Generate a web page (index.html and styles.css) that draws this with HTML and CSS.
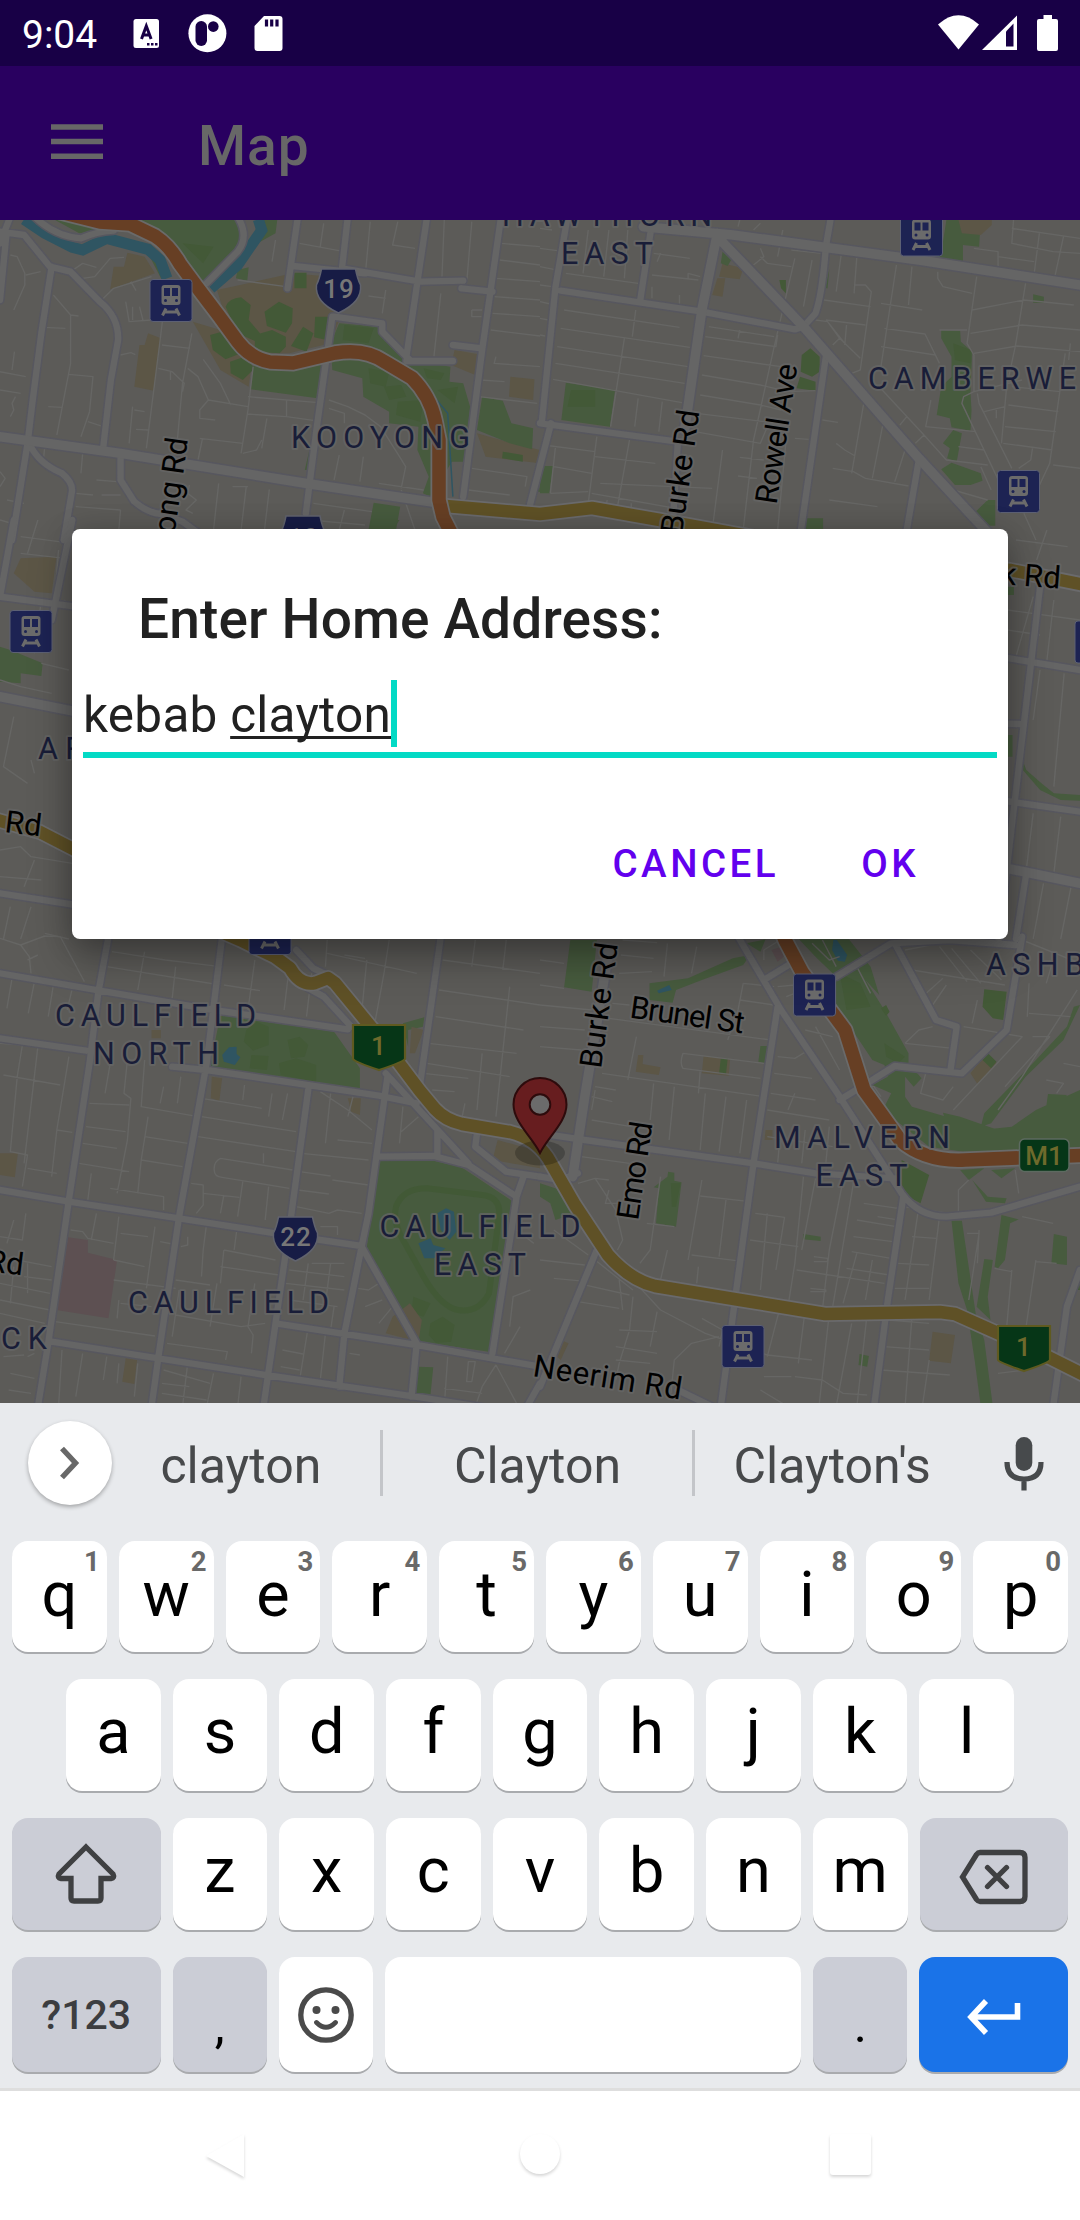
FILE: index.html
```html
<!DOCTYPE html>
<html lang="en">
<head>
<meta charset="utf-8">
<title>Map</title>
<link rel="stylesheet" href="styles.css">
</head>
<body>
<div class="screen">
  <header class="status">
    <span class="time">9:04</span>
    <svg class="status-left" width="160" height="66" viewBox="130 0 160 66">
      <rect x="133.500" y="19" width="25.500" height="29" rx="2.500" fill="#fff"/>
      <path d="M141.500 39l4.800-13 4.800 13M143 35h6.500" fill="none" stroke="#180046" stroke-width="3"/>
      <path d="M147 44.200h2.500M151 44.200h2.500M155 44.200h2.500" stroke="#180046" stroke-width="2.500"/>
      <circle cx="207.400" cy="33.300" r="19" fill="#fff"/>
      <rect x="195.500" y="21" width="11.500" height="25" rx="5.700" fill="#180046"/>
      <circle cx="213.300" cy="26.600" r="5.300" fill="#180046"/>
      <path d="M264 16h15.500q3 0 3 3v29q0 3-3 3h-22q-3 0-3-3V26z" fill="#fff"/>
      <path d="M266.500 19.500v7M271.700 19.500v7M277 19.500v7" stroke="#180046" stroke-width="3.200"/>
    </svg>
    <svg class="status-right" width="130" height="66" viewBox="935 0 130 66">
      <path d="M938 24.500Q958.500 6 979 24.500L958.500 49.500z" fill="#fff"/>
      <path d="M982 50L1017 15.500V50z" fill="#fff"/>
      <path d="M1006 46.500V31.500l7.500-8v23z" fill="#180046"/>
      <path d="M1043.500 15h8.500v4h4q2 0 2 2v28q0 2-2 2h-17q-2 0-2-2V21q0-2 2-2h4.500z" fill="#fff"/>
    </svg>
  </header>
  <div class="appbar">
    <svg class="menu" width="52" height="36" viewBox="0 0 52 36"><path d="M0 3h52M0 17.500h52M0 32.300h52" stroke="#676767" stroke-width="5.600"/></svg>
    <h1 class="title">Map</h1>
  </div>

  <main class="stage">
    <svg class="map" width="1080" height="1183" viewBox="0 220 1080 1183">
      <defs>
        <g id="station">
          <rect x="-21" y="-21" width="42" height="42" rx="3" fill="#1d2353" stroke="#5c6074" stroke-width="1"/>
          <rect x="-9.500" y="-15.500" width="19" height="20" rx="3" fill="#6b6b6b"/>
          <path d="M-7-12.500h6v8h-6zM1-12.500h6v8H1z" fill="#1d2353"/>
          <circle cx="-5.500" cy="0" r="1.500" fill="#1d2353"/><circle cx="5.500" cy="0" r="1.500" fill="#1d2353"/>
          <path d="M-5 8L-8.500 15M5 8l3.500 7M-7 11.500H7" stroke="#6b6b6b" stroke-width="3" fill="none"/>
        </g>
        <path id="shield" d="M-17 0H17Q19 10 22 16Q24 33 0 44Q-24 33-22 16Q-19 10-17 0Z" fill="#171c45" stroke="#61636d" stroke-width="1.500"/>
        <path id="alt" d="M-26 1H26V35Q24 38 0 46Q-24 38-26 35Z" fill="#063617" stroke="#5f5a20" stroke-width="2.200"/>

        <g id="mainA">
          <path d="M30 20L0 100M0 65L70 75L145 170L205 185L290 275Q345 320 343 390L322 510L300 710M150 170L120 370L95 570L80 700L35 990M18 80L0 270M85 700Q110 760 180 790Q215 820 208 850L185 990M350 745V810L390 875Q430 910 470 912L530 935L590 980M865 20L835 235M1010 20L993 175L1220 215L1345 212M850 168L1060 190M1240 20L1180 440M1180 453H1315M1455 20L1400 420L1345 860M1340 235L1430 245M1315 405L1400 415M970 320L1110 340V365L1190 450M965 320L920 650L888 910M1600 640L1535 900"/>
          <path d="M100 20Q160 80 235 85Q280 65 330 62M690 20Q725 80 690 125L600 220"/>
        </g>
        <g id="bigA"><path d="M-30 676L0 680L350 730L900 822L1280 880"/></g>
        <g id="mainB">
          <path d="M80 20L45 230L5 640M0 640L400 695M322 60L292 265M60 242L470 305L740 358L765 350M845 20L830 110Q820 250 800 310L765 350M830 440L755 980M1100 750L1065 960M400 700L385 950"/>
        </g>
        <g id="bigB"><path d="M300 50L560 75L1100 150L1600 230M515 70L470 300L420 660M510 75L765 350L1100 745L1320 990"/></g>
        <g id="mainM">
          <path d="M20 0L0 230M105 0L75 300M0 230L110 260M0 1120L110 1155M1510 200L1470 900L1450 1257M1450 410L1568 450M1450 840L1568 875M1490 1060L1475 1257M1450 610L1480 612"/>
        </g>
        <g id="bigM"><path d="M0 530L110 575M1450 1040L1568 1090"/></g>
        <g id="mainC">
          <path d="M315 20L285 190L260 400L200 810L140 1240L110 1430M0 130L290 182L620 240L1010 298M645 20L600 400L520 860L460 1280L440 1430M0 325L250 362M500 410L600 420L1100 497L1210 520M895 480L845 860L800 1180L765 1430M0 780L200 815L520 865L800 910L1050 948M1280 20L1220 460M1125 440L1070 850L1050 950L1000 1210L985 1370M1095 680L1260 678L1360 705L1500 800L1520 740M1050 950L1210 1240L1195 1400M800 1180L1210 1245L1568 1310M150 1235L460 1285L770 1335L1240 1405L1568 1460M1120 430L1200 520L1280 610L1360 700M1270 600V670M1385 610L1380 650L1470 725L1568 740M1500 800L1430 1270M860 60L910 115L940 130M870 160L940 200L1020 290M1568 1360L1530 1430"/>
        </g>
        <g id="mainD">
          <path d="M0 610L130 630L620 700L800 730L1030 745M575 20L700 240L870 500L1050 790Q1100 860 1180 860L1310 848L1568 770M690 230L620 700L570 1080L525 1430M1055 800L1010 1110L970 1430M165 960L0 1370M0 740L60 750L110 730M650 150L730 100M860 140L1020 40L1190 30L1380 45M1400 20L1355 300L1225 430L1030 408L950 460L870 510M1030 40L1150 270L1210 290L1192 420M1568 1020L1530 1130L1490 1430M400 1380L500 1430"/>
        </g>
        <g id="bigD"><path d="M200 60L130 500L95 740"/></g>
      </defs>
      <rect y="220" width="1080" height="1183" fill="#5c5b58"/>

      <!-- parks, school grounds, water -->
      <g transform="translate(0 210) scale(.34439 .33333)">
        <path class="park" d="M160 30H700L695 110L600 225L560 195L500 100L420 65L330 55L230 70ZM750 30H805L800 70L730 110ZM690 180L722 172L718 212L685 205ZM430 130L470 150L470 210Z"/>
        <path class="dirt" d="M630 240L850 190L960 200L985 330L960 400L840 430H740L660 340ZM560 335L640 360L700 440L730 470L722 530L640 480ZM370 128L420 140L450 190L320 238L330 170L360 170ZM430 370L467 385L447 542L390 530L405 405H420ZM1320 420L1385 432L1380 495L1310 465ZM1482 500L1552 508L1548 570L1478 560ZM1385 670L1490 700L1568 720V760L1410 740Z"/>
        <path class="wood" d="M655 290Q665 265 700 262L728 285L722 330L755 370L745 395L690 370ZM768 305L810 275L850 295L848 340L830 368L775 348ZM740 375L790 360L830 380V410L812 430L740 425ZM880 350L910 370L890 425L845 408ZM915 320H958L948 390L912 382ZM610 375L655 362L700 430L655 448L618 420ZM668 455L710 440L740 475L705 510L670 490ZM855 188H890V235H855ZM530 100L620 110L590 160Z"/>
        <path class="park" d="M735 468L940 460L922 565L728 538ZM985 340L1100 350L1190 450L1308 470L1305 515L1345 520L1365 590L1350 755H1312L1250 860L1228 850L1245 800L1212 720L1215 650L1130 640V605L1055 560L1052 505L965 480L960 400ZM1085 878L1162 890L1150 960H1070ZM1400 560L1460 572L1485 640L1548 655L1545 718L1480 700L1385 660ZM905 690L885 780H892L908 720ZM1560 790L1540 845H1568Z"/>
        <path class="wood" d="M1000 345L1085 355L1070 400L995 390ZM1070 475L1130 485L1120 530L1075 520ZM1115 530L1165 525L1180 560L1130 570ZM1155 575L1230 570L1220 635L1150 615ZM1230 475L1290 490L1280 510L1240 505ZM1270 540L1330 530L1320 580ZM1460 725L1518 735V755L1458 745Z"/>
        <path class="river" d="M70 28L130 70L210 112L240 120L310 85L430 118L465 150L485 205M750 28L760 60L690 165L612 235"/>
        <path class="creek" d="M1220 510L1300 610L1315 860"/>
      </g>
      <g transform="translate(540 210) scale(.34439 .33333)">
        <path class="dirt" d="M530 160L590 175L580 208L520 200ZM515 205H538L530 260L500 255Z"/>
        <path class="park" d="M1180 30H1280L1275 110L1228 105V160L1130 148L1165 130ZM75 518L218 540L203 650L62 630ZM0 768H38L27 850H0ZM775 925H822L820 960H775ZM1165 360L1220 362L1222 395L1255 425L1250 550L1253 600L1250 662L1195 652L1190 625L1152 615L1165 530L1195 500V440L1165 385ZM1200 660L1225 670L1210 755L1182 745L1190 715L1170 700ZM1165 778L1195 758L1280 790L1285 812L1250 825H1205ZM1300 870H1322V947H1295L1265 905ZM530 125L555 150L545 168L525 160ZM1432 253L1463 260V278H1432ZM840 178L828 235H835Z"/>
        <path class="wood" d="M760 435L785 415L812 440V485L790 500L757 485ZM755 500L800 515V542L745 535ZM90 540H160V590H80ZM695 210H714V250L700 235ZM1200 400L1250 420V460L1205 450Z"/>
        <path class="dirt" d="M1215 30H1312V45L1280 75L1225 70Z"/>
      </g>
      <g transform="translate(0 520) scale(.68878 .33333)">
        <path class="dirt" d="M30 115L82 110L75 220L50 215L20 160Z"/>
        <path class="park" d="M0 380L15 390L62 430L60 468L30 460V490L0 485ZM1463 200H1472V225H1463ZM1463 645H1470V710H1463ZM1560 205L1568 230ZM1482 705L1490 750L1512 790L1530 820L1568 825V842L1540 840L1510 810L1485 750ZM540 0H580L570 30H535ZM1170 0H1195V30H1165Z"/>
      </g>
      <g transform="translate(0 930) scale(.34439 .33333)">
        <path class="park" d="M640 255L970 305L1045 415V478L610 410ZM1170 280L1232 262L1228 290L1185 300V350ZM1100 690L1240 688L1340 712L1490 815L1420 1265L1220 1235L1065 955L1085 780ZM1215 1310L1258 1312L1250 1395L1205 1390ZM1470 655L1515 662L1490 670Z"/>
        <path class="wood" d="M715 300L745 275L780 290V345L735 362L708 335ZM835 330L870 320L895 345L885 380L845 385ZM730 375L780 378L775 420L725 415ZM810 400L860 385L918 405V455L815 435ZM1250 1180L1285 1160L1320 1185L1310 1235L1265 1238L1245 1215ZM1200 1100L1250 1120L1230 1160L1195 1150Z"/>
        <path class="track" d="M1150 830Q1170 775 1240 775L1400 795Q1450 800 1450 850L1420 1090Q1390 1150 1330 1140Q1280 1130 1230 1040L1165 920Q1140 870 1150 830Z"/>
        <path class="dirt" d="M615 440L645 445L637 512L612 505ZM0 670H52L43 742L0 735ZM365 1285L398 1290L390 1362L355 1355ZM1190 1120L1225 1170L1215 1235L1120 1210L1140 1160ZM1010 505L1048 505L1045 555L1020 545ZM1445 630L1568 665V715L1430 690ZM1195 290L1230 300L1205 370L1190 370ZM440 300H467V325H440Z"/>
        <path d="M198 922L255 930V968L340 990L315 1165L163 1140Z" fill="#5d5052"/>
        <path class="water" d="M645 375L665 352L687 350V372L698 382L682 405L650 395ZM1270 850L1295 835L1318 845L1325 905L1305 930L1280 900ZM1215 940L1250 925L1258 945L1293 955L1260 985L1232 985Z"/>
      </g>
      <g transform="translate(540 930) scale(.34439 .33333)">
        <path class="park" d="M88 30H165L150 185L70 172ZM318 160L430 145L560 85L610 75L590 105L470 150L395 180L385 218L318 210ZM600 40L655 28L640 65ZM752 28H897L960 110L985 195L945 150L1000 240L1070 370V400L1108 445L1085 470L1060 440V500L1080 530L1180 560L1280 600L1370 590L1440 540L1568 480V650L1400 665L1230 665L1130 650L1020 560L1000 530L1020 490L965 465L1010 440L1000 405L965 390L920 320L860 240V140L800 80ZM1568 225L1520 330L1410 440L1310 580L1280 590L1290 550L1440 390L1530 290L1550 230ZM1475 492L1530 495L1495 545L1470 530ZM1170 548L1220 560L1330 600L1310 620L1180 580ZM640 348H662L655 400L634 395ZM370 740L372 725L390 728V752L411 757L395 890L337 880L345 775L330 772ZM0 760L60 780L102 850L45 870L30 820L0 800ZM765 912L815 920V933L763 928ZM928 1272L955 1278L950 1310L925 1305ZM1195 872H1225L1265 1150L1290 1230L1315 1430H1280L1262 1290L1240 1140L1215 1060ZM1290 987L1315 990L1300 1100L1308 1170L1268 1130ZM1340 855L1390 868L1365 880L1350 990L1330 1015L1320 1010ZM1255 750L1300 800L1355 805L1350 820L1295 815ZM1220 720L1290 715L1245 750ZM1310 720L1380 715L1340 745ZM1492 912L1530 920V1005L1485 1000Z"/>
        <path class="wood" d="M1290 178L1355 185L1345 270L1315 265L1285 230ZM1050 690L1130 735L1105 820L1050 790ZM870 130L930 160L960 230L890 240ZM1000 340L1060 380L1040 400L1005 380ZM1560 1010V1080H1568ZM380 760H408L395 830H383ZM990 235L1005 225L1015 245L1005 258ZM1300 370L1325 395L1310 415L1285 390Z"/>
        <path class="dirt" d="M475 378L552 388L548 437L470 430ZM285 375H300L298 402L350 412L345 435L278 425ZM1140 1205L1205 1215L1193 1300L1130 1292ZM1250 430L1295 372L1327 400L1270 462ZM60 1230L83 1240L60 1290L50 1280ZM655 600H675V630H652Z"/>
        <path class="wood" d="M525 385H545L540 433L520 430ZM1300 370L1325 395L1310 415L1285 390Z"/>
        <path d="M672 60L700 50L708 80L690 95Z" fill="#5d5052"/>
        <path class="water" d="M340 182L375 165L383 180L345 190ZM852 30H862L892 75L885 95L865 92L848 60Z"/>
      </g>

      <!-- side streets -->
      <g class="street">
        <g transform="translate(0 210) scale(.34439 .33333)">
          <path d="M30 135L50 140L72 190V225L40 300M75 195L118 185M205 185L240 160L280 172M240 205L275 200L320 145L360 142M290 275L330 235L440 200M380 215L395 242M155 255L180 285L205 315L228 318M205 315V460L165 675M128 352L190 355M200 493L270 500L260 605L235 680M365 275L375 335L440 330L445 315M385 290V330M405 290L415 330M472 330L465 390L425 715M470 405L552 415M557 370L530 520L515 690M350 435L380 428L393 434M460 475L500 485L535 520L530 545M495 485V510M545 475L575 500L605 570L580 600V625L625 630M590 448L640 520L670 585M605 570L720 590M735 470L720 600L700 730M720 560L925 578M718 612L830 620M775 625L760 715M832 572V620L915 632M580 685L705 700M588 685L575 750M760 690L745 720L705 730M0 540L60 550M0 485L75 500M42 425L35 480M45 560L35 580L40 600L30 620M385 590L375 700M390 600L420 605M395 658L430 660M140 590L180 592M255 635L300 650M550 825L545 850L570 870L540 900L560 910M635 820L620 960M715 830L700 960M782 838L768 960M675 830H720M910 880L1080 905M1000 900L985 960M1165 840L1205 960M955 570L1010 590L1060 615L1105 650L1160 740L1178 770L1165 835M1100 820L1230 840M1055 740L1045 815M985 735L970 810M955 595L1000 610V640M940 40L930 110M1075 35L1062 180M1155 35L1140 105L1205 115M1290 30L1283 210M1370 35L1355 220M870 100L1000 125M690 210L830 230M800 90L790 155M1120 240L1110 310M1120 265L1070 258M1280 250L1260 440M1455 100L1568 110M1450 150L1568 165M1440 205L1568 215M1435 260L1568 270M1430 310L1568 320M1425 360L1568 378M1440 440L1435 460L1568 470M1395 510L1465 515M1390 560L1560 580M1370 775L1470 790L1530 800L1525 830M1360 840L1480 855M1370 300H1400M1370 300V320H1398M20 870L70 880M0 930L50 945M220 850L270 855M220 890L350 900M295 855H350M350 900L345 960M0 785L15 805L0 830M130 710L125 760M240 730L235 790M280 810L340 815M900 930L1060 945"/>
        </g>
        <g transform="translate(540 210) scale(.34439 .33333)">
          <path d="M0 55L35 60M0 115L50 122M0 170L40 178M0 225L35 230M0 275L30 282M0 325L25 330M0 375L15 378M75 190L285 220M140 60L125 190M200 60L185 200M255 60L245 205M330 130L435 145M325 195L460 210M430 190L465 200M430 190V210M350 130L340 155M70 300L405 352M278 300L268 380M60 355L435 412M50 410L430 470M45 460L420 520M38 508L412 578M245 385L205 650M285 565L275 650M355 575L345 665M490 350L680 380M580 360L575 385M690 375L685 410L480 380M475 437L700 470M470 495L640 525L720 545L800 542M465 555L640 585L700 600M455 610L690 640M450 665L640 700L660 650M740 145L680 410L620 690L590 960M790 150L765 290M640 115L650 140L620 165M640 140L660 160L730 170M730 120L820 130M875 130L860 245M920 140L912 250M915 225H945L962 245L930 480L905 490M1035 165L990 470M1080 170L1070 285M990 280L1110 300M825 270L960 290M830 330L945 345M800 330L835 335L870 385L930 445M835 335L885 400M890 345L885 405M870 385L850 405M1000 355L1118 372L1160 460M990 410L1148 435M1155 185V205L1170 230L1255 250M1268 200L1240 400L1260 435V545L1230 560L1225 580L1340 830M1260 545L1400 510M1270 550L1275 580L1370 775M1410 220L1380 410L1355 530L1340 700M1255 300L1405 270L1550 285M1250 370L1400 345L1568 360M1260 430L1385 408L1568 425M1540 400L1535 450M1370 530L1510 545M1360 585L1505 605M1350 650L1498 665M1345 700L1488 720M1525 430L1480 760L1430 870M1430 715L1425 750L1390 775M1290 605L1350 590M1325 600V625M985 530L1115 675L1180 750L1300 765M1065 620L1045 645M1115 675L1090 700M1135 570L1120 650L1265 665M940 580L905 790M1000 620L965 805M1060 720L1030 815M850 775L910 785L945 805L1070 828M860 700L885 720L915 738M820 630L865 637M840 870L980 890M740 685L780 688M715 685L690 960M530 720L500 960M580 742L650 750M575 798L630 805M175 820L500 835M165 680L140 880M260 690L225 890M10 705L160 725M160 740L335 760M45 710L30 850M40 770L150 790M30 850L140 845M150 850L420 900M195 870L190 900M265 880V900M390 900L380 950M1375 30L1370 100L1490 125L1568 130M1450 70L1435 190M1520 80L1495 200M1370 55L1568 85M1260 115L1330 125V180M1330 140L1435 155M1490 765L1568 775M1405 910L1440 990M1215 710L1290 720M1200 840L1300 870M1280 770L1310 840M1160 360H1240M705 60L690 140M640 40L620 60M580 30L575 50M325 230V265M405 255V285"/>
        </g>
        <g transform="translate(0 520) scale(.68878 .33333)">
          <path d="M55 0L40 100M30 50L105 70M30 100L95 115M85 90L80 220M60 240L50 400M95 240L85 260M60 430L100 450M0 480L30 500L75 520M20 590L5 740L40 790M45 720L50 760M0 990L30 980L45 1010L105 1030M0 1070L60 1080M50 1020L35 1100M15 1160L5 1257M45 1160L30 1257M65 1240L100 1257M1520 30L1505 120M1475 60L1550 80M1500 230L1475 410M1530 240L1520 420M1510 450L1500 600M1545 460L1530 800M1490 470L1475 840M1500 880L1490 1050M1540 890L1530 1060M1515 1090L1500 1257M1555 1100L1540 1257M1463 270L1568 300M1463 330L1510 345"/>
        </g>
        <g transform="translate(0 930) scale(.34439 .33333)">
          <path d="M0 25L60 45L85 80L90 130M60 45L130 18L175 20L245 155M80 90L110 75M35 145L20 235M100 155L82 250M155 165L140 260M210 175L195 240M310 110L640 165M325 65L480 90L640 110M420 65L400 180M510 110L500 205M650 165L755 182M740 90L720 240M840 110L825 240M905 130L890 260M950 70L1210 130M950 30L945 110M1065 90L1050 250M1060 85L1000 75M1130 30L1115 130L1090 270M1285 90L1568 130M1275 180L1568 225M1265 260L1520 300M1245 340L1500 370M1240 400L1480 440M1480 170L1440 560M1400 370L1385 540M1350 520L1340 570M1380 30L1370 110M1470 30L1460 120M1230 430L1360 445M1255 480L1320 485M320 400L305 490M370 390L360 490L380 505L370 630L340 790M420 390L410 530L575 560M475 470L465 520M525 440L515 520M260 520L375 525M250 590L365 605M240 640L340 655M230 700L375 725M430 560L410 690L400 790M420 620L545 640M410 690L530 710M320 775L475 800V840M265 730L255 810M0 340L65 345L50 440L30 665L80 675L65 770M10 435L175 465M110 350L70 700M200 380L165 600L150 740M165 600L210 607M80 715L165 730M585 505L760 535M710 465L705 510M790 490L780 560M835 490L820 570M585 560L860 605M575 620L860 665M640 685L850 720M640 685Q620 695 622 720Q622 740 645 742L840 775M765 670V700M555 760L590 765V825L570 850M590 790L695 802M650 795L640 850M705 755L690 860M780 770L770 870M875 670L1070 690M870 725L960 738M865 780L955 792M965 750L1070 765M860 830L955 850L980 840L1050 850M980 630L1080 640M960 490L945 640M930 485L1010 540L1080 600M1025 500L1010 560M1170 530L1160 640M1215 560L1165 605M280 850L265 930M345 860L330 990M350 910L430 920M450 890L425 1075M465 935L515 945M525 950L545 945V920M600 880L590 960M205 900L240 905L255 925L330 940M330 990L420 1010M330 1050L510 1075M345 1110L340 1165M350 1120L440 1130M160 1175L450 1218M510 1050L610 1065M590 960L585 1040M650 960L640 1060M650 960L800 990M640 1010L810 1035M690 880L680 960M520 1080L500 1220M630 1060L610 1190M510 1155L700 1190L770 1180M740 1060L720 1190L735 1215L730 1270M485 1240L660 1265L655 1290M840 1020L1000 1040M830 1060L1000 1080M895 1000L880 1110M960 1000L945 1120M905 1000H1000M840 1110L980 1130M930 890H980V915M970 1130L960 1200M895 1190L870 1350M945 1210L930 1350M820 1260L880 1272M815 1310L870 1320M1015 1270L1045 1275M1100 1060L1070 1080L1040 1075M1110 1110L1060 1130M1140 1130L1100 1180M180 1260L170 1430M240 1270L220 1400M310 1280L300 1350M345 1300L340 1360M400 1300L390 1400M475 1320L610 1360M470 1360L550 1370M545 1300L530 1430M620 1330L600 1430M700 1340L690 1430M470 1390L600 1410M40 870L20 940M75 850L65 930L0 920M0 980L150 1010M40 1010L30 1120M80 1000V1090M70 1040L150 1050M0 1060L145 1090M0 1110L145 1140M0 1150L130 1180M80 1280L100 1270M10 1280L70 1275M30 1330L100 1345M25 1380L90 1390M1300 1280L1290 1430M1360 1295H1380L1370 1355H1355ZM1440 1305L1400 1370L1380 1430M1440 1305L1500 1420M1290 1375L1400 1390M1510 1190L1465 1270M1540 1080L1490 1100L1480 1190M1500 900L1550 940"/>
        </g>
        <g transform="translate(540 930) scale(.34439 .33333)">
          <path d="M240 30L340 38M235 75L330 85M230 130L325 125M0 90L70 100M0 165L70 175M0 225L150 240M0 290L130 300M0 350L120 360M200 265L670 330M210 220L260 225M370 40L360 140M455 50L440 130M590 160L575 240L545 330M590 160L680 170M580 210L680 225M280 320L255 450M180 430L650 500M415 370L650 400M415 370Q405 400 415 415L640 445M465 425L460 490M390 470L375 630M330 460L320 570M480 490L465 660M540 500L520 665M600 510L580 670M160 480L150 540M160 470L220 480M150 500L210 515M150 570L265 590M690 130L740 110M690 170L740 165M715 200L740 190M690 380L740 385L780 360M735 290L770 370M770 300L850 320M800 290L870 420M680 430L790 445M670 490L800 510M660 540L840 570M740 490L720 540M660 620L850 650M910 460L970 470L990 500M700 590L690 700M770 600L760 700M840 590L830 700M120 680L260 700M160 745L220 840L240 930L225 960M110 760L160 745L200 750M200 780L190 820H230M350 740L320 960L290 1000M310 880L390 890M465 798L610 815M470 750L430 990M540 810L520 980M625 850L710 862L685 1020M660 850L640 1080M610 930L750 950M765 740L740 1000L720 1130M800 745L760 960M880 750L840 960L820 1140M910 760L850 1130M940 820L1040 835M920 870L1035 890M980 860L1030 868M910 920L1025 935M905 965L1020 985M890 1015L1015 1035M795 980L835 985V995H795M785 1075L830 1080V1085H785M745 1020L1000 1060M920 970L880 1120M965 990L945 1110M440 975L570 992M460 1010L455 1060M370 960L350 1050M0 990L130 1005M40 1045L140 1055M270 1100L260 1200L230 1300L220 1350M200 1000L270 1050L350 1140L480 1210L660 1275L790 1290M160 990L270 1080M230 1050L240 1140M110 1115L230 1135M110 1060L260 1095M40 900L80 930L140 975M340 1145L320 1250M230 1200L340 1205M220 1250L340 1270M220 1290L320 1300M470 1165L530 1200L520 1250M520 1220L440 1240L390 1290L380 1390M700 1120L660 1280M770 1140L750 1300M840 1150L810 1430M905 1180L860 1430M950 1150L920 1430M740 1340L820 1350L880 1390L950 1395M650 1340L730 1340M640 1380L720 1430M1010 1170L1130 1180M1000 1250L1130 1260M990 1320L1190 1335M1080 1160L1060 1430M1130 1290L1110 1430M1055 830L1190 850M1100 830L1060 1110M1160 860L1130 1110M1080 920L1150 925M1040 1000L1130 1005M1030 1075H1130M1240 910H1275L1245 1110M1275 900L1270 1000M1370 1020L1350 1250M1440 990L1410 1200M1320 1015L1370 1025M1440 995L1500 1000M1400 860L1490 880M1330 1330L1410 1320M1245 750L1215 780V850M1380 720L1390 790M1060 60L1160 40M1160 50L1240 155M1195 55L1280 160M1250 60L1340 150M1080 120L1350 165M1110 200L1170 145M1130 240L1180 165M1060 340L1100 300L1140 290M1060 340L1200 355M1230 290L1400 320L1200 540M1270 210L1255 280M1420 160L1415 260M1420 250L1540 260M1430 320L1480 320L1350 470M1490 90L1470 160M1560 180L1400 440L1330 540M1520 400L1568 410M1470 450L1520 460L1500 490M1120 430L1105 490L1170 510L1200 470M1400 30L1568 100M790 40L840 90L870 80M820 30L860 110M920 110L960 190M650 90V60L700 28"/>
        </g>
      </g>

      <!-- arterial roads: casings first, then fills -->
      <g class="casing">
        <use href="#mainA" transform="translate(0 210) scale(.34439 .33333)"/>
        <use href="#mainB" transform="translate(540 210) scale(.34439 .33333)"/>
        <use href="#mainM" transform="translate(0 520) scale(.68878 .33333)"/>
        <use href="#mainC" transform="translate(0 930) scale(.34439 .33333)"/>
        <use href="#mainD" transform="translate(540 930) scale(.34439 .33333)"/>
        <g class="wide-casing">
          <use href="#bigA" transform="translate(0 210) scale(.34439 .33333)"/>
          <use href="#bigB" transform="translate(540 210) scale(.34439 .33333)"/>
          <use href="#bigM" transform="translate(0 520) scale(.68878 .33333)"/>
          <use href="#bigD" transform="translate(540 930) scale(.34439 .33333)"/>
        </g>
      </g>
      <g class="fill">
        <use href="#mainA" transform="translate(0 210) scale(.34439 .33333)"/>
        <use href="#mainB" transform="translate(540 210) scale(.34439 .33333)"/>
        <use href="#mainM" transform="translate(0 520) scale(.68878 .33333)"/>
        <use href="#mainC" transform="translate(0 930) scale(.34439 .33333)"/>
        <use href="#mainD" transform="translate(540 930) scale(.34439 .33333)"/>
        <g class="wide-fill">
          <use href="#bigA" transform="translate(0 210) scale(.34439 .33333)"/>
          <use href="#bigB" transform="translate(540 210) scale(.34439 .33333)"/>
          <use href="#bigM" transform="translate(0 520) scale(.68878 .33333)"/>
          <use href="#bigD" transform="translate(540 930) scale(.34439 .33333)"/>
        </g>
      </g>

      <!-- highways -->
      <g fill="none" stroke-linejoin="round">
        <g stroke="#6a6a6c" stroke-width="16">
          <path id="g1" d="M446 506L540 514L592 508L660 520L770 540L900 560L1010 570L1090 586"/>
          <path id="g2" d="M-10 818L40 832L75 850L160 905L240 940L275 957L290 968Q300 986 315 983L328 978L335 983L380 1038L420 1091L435 1109Q445 1120 462 1124L510 1132Q535 1138 548 1158L575 1205L608 1255Q630 1280 655 1286L740 1300L825 1314L940 1312L955 1314L1022 1344L1090 1378"/>
        </g>
        <use href="#g1" stroke="#5f5126" stroke-width="12.500"/>
        <use href="#g2" stroke="#5f5126" stroke-width="12.500"/>
        <g stroke="#6a6a6a" stroke-width="17">
          <path id="o1" d="M60 212L100 222L130 224L155 236Q170 246 180 264L197 287L219 316L238 342Q250 358 270 362L293 363L335 353Q365 348 385 362L412 378Q430 396 435 420L439 440V500L443 517L470 570"/>
          <path id="o2" d="M760 880L785 940L802 972L845 1030L864 1090L880 1112L900 1140Q925 1162 965 1160L1090 1155"/>
        </g>
        <use href="#o1" stroke="#673f24" stroke-width="13.500"/>
        <use href="#o2" stroke="#673f24" stroke-width="13.500"/>
      </g>

      <!-- district names -->
      <g class="district">
        <text x="502" y="225.500" textLength="210">HAWTHORN</text>
        <text x="561" y="264" textLength="92">EAST</text>
        <text x="868" y="389" textLength="208">CAMBERWE</text>
        <text x="291" y="447.500" textLength="179">KOOYONG</text>
        <text x="38" y="759" textLength="46">AR</text>
        <text x="55" y="1026" textLength="201">CAULFIELD</text>
        <text x="93" y="1063.500" textLength="126">NORTH</text>
        <text x="128" y="1313" textLength="201">CAULFIELD</text>
        <text x="1" y="1348.500" textLength="46">CK</text>
        <text x="379.500" y="1237" textLength="201">CAULFIELD</text>
        <text x="434" y="1275" textLength="92">EAST</text>
        <text x="774" y="1147.500" textLength="176">MALVERN</text>
        <text x="815.500" y="1185.500" textLength="92">EAST</text>
        <text x="986" y="974.500" textLength="98">ASHB</text>
      </g>
      <g class="road-name">
        <text transform="translate(188 439) rotate(-82)" text-anchor="end">Kooyong Rd</text>
        <text transform="translate(682 535) rotate(-82)" textLength="125">Burke Rd</text>
        <text transform="translate(776.500 505) rotate(-81.500)" textLength="141">Rowell Ave</text>
        <text transform="translate(1000 584) rotate(4.500)" textLength="60">k Rd</text>
        <text transform="translate(4 832) rotate(7)">Rd</text>
        <text transform="translate(-14 1271) rotate(7)">Rd</text>
        <text transform="translate(601 1069) rotate(-82.300)" textLength="126">Burke Rd</text>
        <text transform="translate(629 1017.500) rotate(8)" textLength="115">Brunel St</text>
        <text transform="translate(638 1221) rotate(-81.500)" textLength="99">Emo Rd</text>
        <text transform="translate(532 1376) rotate(9)" textLength="150">Neerim Rd</text>
      </g>

      <!-- stations and route shields -->
      <use href="#station" x="171" y="300.500"/>
      <use href="#station" x="921.500" y="235"/>
      <use href="#station" x="1018.500" y="491.500"/>
      <use href="#station" x="31" y="631.500"/>
      <use href="#station" x="1096" y="642"/>
      <use href="#station" x="270" y="933.500"/>
      <use href="#station" x="814.500" y="995"/>
      <use href="#station" x="743" y="1346.500"/>
      <use href="#shield" x="338.500" y="269"/>
      <use href="#shield" x="303" y="516"/>
      <use href="#shield" x="295.500" y="1217"/>
      <g class="shield-num">
        <text x="339" y="298">19</text>
        <text x="303.500" y="547">19</text>
        <text x="296" y="1246">22</text>
      </g>
      <use href="#alt" x="379" y="1024"/>
      <use href="#alt" x="1024" y="1325"/>
      <rect x="1019.500" y="1139" width="49.500" height="32.500" rx="5" fill="#063617" stroke="#5d6a60" stroke-width="1.500"/>
      <g class="alt-num">
        <text x="378.500" y="1055">1</text>
        <text x="1023.500" y="1356">1</text>
        <text x="1044" y="1164.500">M1</text>
      </g>

      <!-- marker -->
      <ellipse cx="540" cy="1153" rx="25" ry="12.500" fill="rgba(0,0,0,.22)"/>
      <path d="M540 1153C532 1137 513.500 1122 513.500 1104.500A26.500 26.500 0 0 1 566.500 1104.500C566.500 1122 548 1137 540 1153Z" fill="#671d1f" stroke="#2d0b0c" stroke-width="2"/>
      <circle cx="540" cy="1104.500" r="10.300" fill="#6b6b6b" stroke="#2d0b0c" stroke-width="2"/>
    </svg>

    <section class="dialog">
      <h2 class="dialog-title">Enter Home Address:</h2>
      <div class="field"><span class="typed">kebab <span class="composing">clayton</span></span><span class="caret"></span></div>
      <div class="actions"><button class="action">CANCEL</button><button class="action">OK</button></div>
    </section>
  </main>

  <section class="keyboard">
    <div class="suggest">
      <span class="expand"><svg width="84" height="84" viewBox="0 0 84 84"><path d="M34 27.500L47.500 42 34 56.500" fill="none" stroke="#686868" stroke-width="5.400"/></svg></span>
      <span class="word word-first">clayton</span><i class="bar"></i><span class="word">Clayton</span><i class="bar"></i><span class="word word-last">Clayton's</span>
      <svg class="mic" width="40" height="54" viewBox="0 0 40 54"><rect x="11.700" y="0" width="16.600" height="34" rx="8.300" fill="#474a4c"/><path d="M3 25Q3 42 20 42Q37 42 37 25M20 42v11.500" fill="none" stroke="#474a4c" stroke-width="5.200"/></svg>
    </div>
    <div class="row row-1">
      <span class="key">q<sup>1</sup></span><span class="key">w<sup>2</sup></span><span class="key">e<sup>3</sup></span><span class="key">r<sup>4</sup></span><span class="key">t<sup>5</sup></span><span class="key">y<sup>6</sup></span><span class="key">u<sup>7</sup></span><span class="key">i<sup>8</sup></span><span class="key">o<sup>9</sup></span><span class="key">p<sup>0</sup></span>
    </div>
    <div class="row row-2">
      <span class="key">a</span><span class="key">s</span><span class="key">d</span><span class="key">f</span><span class="key">g</span><span class="key">h</span><span class="key">j</span><span class="key">k</span><span class="key">l</span>
    </div>
    <div class="row row-3">
      <span class="key tone side icon"><svg width="64" height="64" viewBox="0 0 64 64"><path d="M32 5L59 32Q61 36 57 36.500H47V56Q47 59 44 59H20Q17 59 17 56V36.500H7Q3 36 5 32Z" fill="none" stroke="#3f4042" stroke-width="5.300"/></svg></span>
      <span class="key">z</span><span class="key">x</span><span class="key">c</span><span class="key">v</span><span class="key">b</span><span class="key">n</span><span class="key">m</span>
      <span class="key tone side icon"><svg class="back" width="72" height="60" viewBox="0 0 72 60"><path d="M22 5.500H62Q67 5.500 67 10.500V49.500Q67 54.500 62 54.500H22Q20 54.500 18.500 52.500L4.500 30 18.500 7.500Q20 5.500 22 5.500Z" fill="none" stroke="#3f4042" stroke-width="5.300"/><path d="M29.500 20.500l19 19M48.500 20.500l-19 19" stroke="#3f4042" stroke-width="5.300" stroke-linecap="round"/></svg></span>
    </div>
    <div class="row row-4">
      <span class="key tone side mode">?123</span><span class="key tone punct">,</span>
      <span class="key icon"><svg width="58" height="58" viewBox="0 0 58 58"><circle cx="29" cy="29" r="25.200" fill="none" stroke="#4a4a4a" stroke-width="5.300"/><circle cx="19.500" cy="24" r="4" fill="#4a4a4a"/><circle cx="38.500" cy="24" r="4" fill="#4a4a4a"/><path d="M19.500 36.500Q29 46 38.500 36.500" fill="none" stroke="#4a4a4a" stroke-width="4.800" stroke-linecap="round"/></svg></span>
      <span class="key space"></span><span class="key tone punct">.</span>
      <span class="key enter side icon"><svg width="54" height="36" viewBox="0 0 54 36"><path d="M19 2L4 18 19 34M5 18H50.500V4" fill="none" stroke="#fff" stroke-width="5.600"/></svg></span>
    </div>
  </section>
  <nav class="navbar">
    <svg width="1080" height="129" viewBox="0 2091 1080 129">
      <g class="nav-shape"><path d="M206 2156L244 2134V2177Z"/><circle cx="540" cy="2154" r="20"/><rect x="830" y="2134" width="41" height="41" rx="3"/></g>
    </svg>
  </nav>
</div>
</body>
</html>
```
FILE: styles.css
```css
* { box-sizing: border-box; }
body { margin: 0; background: #fff; font-family: Roboto, "Liberation Sans", sans-serif; }
.screen { width: 1080px; height: 2220px; display: flex; flex-direction: column; overflow: hidden; }

.status { height: 66px; flex: none; background: #180046; display: flex; align-items: center; padding-left: 22px; padding-right: 15px; }
.time { width: 108px; font-size: 39px; line-height: 66px; color: #fff; padding-top: 3px; }
.status-right { margin-left: auto; }
.status svg { flex: none; display: block; }

.appbar { height: 154px; flex: none; background: #290060; display: flex; align-items: center; padding: 0 51px; }
.menu { display: block; margin-top: -3px; }
.title { margin: 6px 0 0 95px; font-size: 55px; font-weight: 500; line-height: 64px; letter-spacing: 1px; color: #676767; }

.stage { height: 1183px; flex: none; display: grid; overflow: hidden; }
.map, .dialog { grid-area: 1 / 1; }
.map { display: block; }
.map path { vector-effect: non-scaling-stroke; }
.park { fill: #475b3e; }
.wood { fill: #435937; }
.track { fill: none; stroke: #425936; stroke-width: 6px; }
.dirt { fill: #5c5646; }
.water { fill: #2f5562; }
.river { fill: none; stroke: #2f5562; stroke-width: 11px; }
.creek { fill: none; stroke: #2f5562; stroke-width: 1.5px; }
.street { fill: none; stroke: #666664; stroke-width: 1.4px; stroke-linejoin: round; }
.casing, .fill { fill: none; stroke-linecap: round; stroke-linejoin: round; }
.casing { stroke: #57575f; stroke-width: 9.4px; }
.fill { stroke: #656565; stroke-width: 6.4px; }
.wide-casing { stroke-width: 12.5px; }
.wide-fill { stroke-width: 9.5px; }
.district { font-size: 30.5px; fill: #191d38; }
.district text, .road-name text { paint-order: stroke; stroke: rgba(102, 102, 102, .75); stroke-width: 4px; stroke-linejoin: round; }
.road-name { font-size: 31px; fill: #000; }
.shield-num, .alt-num { font-size: 26px; font-weight: 500; text-anchor: middle; }
.shield-num { fill: #777; letter-spacing: 1px; }
.alt-num { fill: #6e6a2c; }

.dialog { width: 936px; height: 410px; margin: 309px 0 0 72px; background: #fff; border-radius: 8px; box-shadow: 0 20px 44px rgba(0, 0, 0, .28), 0 4px 30px rgba(0, 0, 0, .2); padding: 58px 11px 0; display: flex; flex-direction: column; z-index: 1; }
.dialog-title { margin: 0 0 0 55px; font-size: 55px; font-weight: 500; line-height: 64px; letter-spacing: .15px; color: #212121; }
.field { display: flex; height: 77px; margin-top: 30px; border-bottom: 6px solid #03dac5; font-size: 49.5px; line-height: 69px; letter-spacing: .25px; color: #212121; }
.composing { text-decoration: underline; text-decoration-thickness: 2.5px; text-underline-offset: 4px; text-decoration-skip-ink: none; }
.caret { width: 6px; height: 67px; margin-top: -1px; background: #03dac5; }
.actions { display: flex; justify-content: flex-end; gap: 82px; margin-top: 78px; padding-right: 78px; }
.action { border: 0; padding: 0; background: none; font: 500 38.5px/56px Roboto, "Liberation Sans", sans-serif; letter-spacing: 3.5px; color: #6200ee; }

.keyboard { height: 688px; flex: none; background: #e8eaed; border-bottom: 3px solid #dedede; display: flex; flex-direction: column; }
.suggest { height: 138px; padding: 18px 36px 0 28px; display: flex; align-items: flex-start; font-size: 50px; line-height: 84px; color: #47494b; }
.expand { width: 84px; height: 84px; border-radius: 50%; background: #fff; box-shadow: 0 2px 4px rgba(0, 0, 0, .3); flex: none; }
.expand svg { display: block; }
.word { width: 310px; text-align: center; padding-top: 3px; }
.word-first { width: 268px; padding-right: 10px; }
.word-last { width: 274px; }
.bar { width: 3px; height: 66px; margin-top: 9px; background: #c3c5c9; }
.mic { margin: 16px 0 0 35px; flex: none; }
.row { display: flex; gap: 12px; padding: 0 12px; font-size: 63px; color: #000; }
.row-1 { margin-bottom: 26px; }
.row-2 { padding: 0 66px; margin-bottom: 27px; }
.row-3 { margin-bottom: 27px; }
.key { position: relative; flex: 1 1 0; height: 112px; border-radius: 16px; background: #fff; box-shadow: 0 2px 0 #a9abae; display: flex; align-items: center; justify-content: center; padding-bottom: 7px; line-height: 74px; }
.row-1 .key { height: 111px; margin-bottom: 1px; padding-bottom: 4px; }
.row-4 .key { height: 115px; }
.key.icon { padding-bottom: 0; }
.key.side { flex: 0 0 148.5px; }
.key.tone { background: #cbcdd6; }
.key sup { position: absolute; top: 5px; right: 7px; font-size: 27.5px; font-weight: 700; line-height: 32px; color: #696969; }
.key.mode { font-size: 41px; font-weight: 500; color: #3c3d40; padding-bottom: 0; }
.key.punct { font-size: 50px; padding: 21px 0 0; }
.key.space { flex: 0 0 416px; }
.key.enter { background: #1a73e8; }
.enter svg { margin-top: 4px; }
.back { margin-top: 6px; }

.navbar { height: 129px; flex: none; background: #fff; }
.nav-shape { fill: #fff; filter: drop-shadow(0 2px 1.5px rgba(0, 0, 0, .16)); }
```
